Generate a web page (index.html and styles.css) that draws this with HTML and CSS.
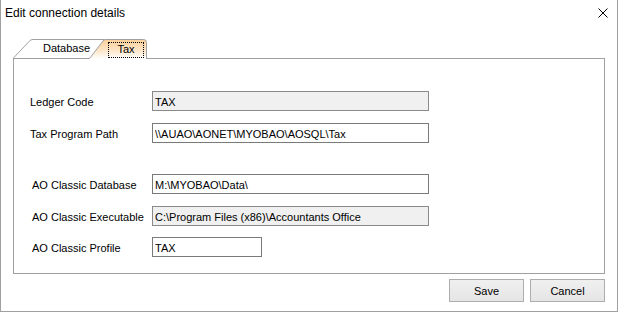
FILE: index.html
```html
<!DOCTYPE html>
<html>
<head>
<meta charset="utf-8">
<title>Edit connection details</title>
<link rel="stylesheet" href="styles.css">
</head>
<body>
<div class="window">
  <div class="titlebar">
    <span class="title">Edit connection details</span>
    <svg class="close" width="10" height="10" viewBox="0 0 10 10"><path d="M0.5 0.5 L9.5 9.5 M9.5 0.5 L0.5 9.5" stroke="#000" stroke-width="1" fill="none"/></svg>
  </div>
  <div class="content">
    <div class="tabs">
      <div class="tab tab-db">
        <svg class="tab-shape" width="92" height="19" viewBox="0 0 92 19"><path d="M0.5 19 L16 2.5 Q17.5 0.5 20 0.5 L91.5 0.5 L91.5 19" fill="#fff" stroke="#a0a0a0"/></svg>
        <span class="tab-label">Database</span>
      </div>
      <div class="tab tab-tax">
        <svg class="tab-shape" width="58" height="20" viewBox="0 0 58 20">
          <defs><linearGradient id="tg" x1="0" y1="0" x2="0" y2="1"><stop offset="0" stop-color="#fbcf98"/><stop offset="0.55" stop-color="#fde5c8"/><stop offset="1" stop-color="#ffffff"/></linearGradient></defs>
          <path d="M0 20 L0.5 19.5 L14 2 Q15 0.5 17 0.5 L54.5 0.5 Q57.5 0.5 57.5 3.5 L57.5 20 Z" fill="url(#tg)" stroke="none"/>
          <path d="M0.5 19.5 L14 2 Q15 0.5 17 0.5 L54.5 0.5 Q57.5 0.5 57.5 3.5 L57.5 20" fill="none" stroke="#a0a0a0"/>
        </svg>
        <span class="tab-label focus">Tax</span>
      </div>
    </div>
    <div class="panel">
      <div class="row"><label class="lbl">Ledger Code</label><input class="box ro" type="text" value="TAX" readonly></div>
      <div class="row"><label class="lbl">Tax Program Path</label><input class="box" type="text" value="\\AUAO\AONET\MYOBAO\AOSQL\Tax"></div>
      <div class="row sep ao"><label class="lbl">AO Classic Database</label><input class="box" type="text" value="M:\MYOBAO\Data\"></div>
      <div class="row ao"><label class="lbl">AO Classic Executable</label><input class="box ro" type="text" value="C:\Program Files (x86)\Accountants Office" readonly></div>
      <div class="row tight ao"><label class="lbl">AO Classic Profile</label><input class="box short" type="text" value="TAX"></div>
    </div>
    <div class="footer">
      <button class="btn">Save</button>
      <button class="btn">Cancel</button>
    </div>
  </div>
</div>
</body>
</html>
```
FILE: styles.css
```css
html, body {
  margin: 0;
  padding: 0;
  background: #fff;
}
.window {
  box-sizing: border-box;
  width: 618px;
  height: 312px;
  border: 1px solid #a0a0a0;
  border-top: none;
  background: #fff;
  font-family: "Liberation Sans", Arial, sans-serif;
  color: #000;
}
.titlebar {
  box-sizing: border-box;
  height: 39px;
  display: flex;
  justify-content: space-between;
  align-items: flex-start;
  padding: 6px 9px 0 4px;
}
.title {
  font-size: 12px;
  line-height: 14px;
}
.close {
  display: block;
  margin-top: 2px;
}
.content {
  padding: 0 12px;
}
.tabs {
  display: flex;
  height: 19px;
  font-size: 11px;
}
.tab {
  display: grid;
  position: relative;
}
.tab > * {
  grid-area: 1 / 1;
}
.tab-shape {
  display: block;
}
.tab-db {
  width: 92px;
  height: 19px;
}
.tab-db .tab-label {
  padding-left: 30px;
  line-height: 19px;
}
.tab-tax {
  width: 58px;
  height: 20px;
  margin-left: -16px;
  z-index: 2;
}
.tab-label.focus {
  box-sizing: border-box;
  margin: 3px 0 0 19px;
  width: 36px;
  height: 16px;
  border: 1px dotted #000;
  text-align: center;
  line-height: 13px;
}
.panel {
  box-sizing: border-box;
  height: 216px;
  border: 1px solid #a0a0a0;
  padding: 32px 0 0 16px;
  display: flex;
  flex-direction: column;
}
.row {
  display: flex;
  align-items: center;
  height: 20px;
  font-size: 11px;
}
.row + .row {
  margin-top: 12px;
}
.row.sep {
  margin-top: 31px;
}
.row.tight {
  margin-top: 11px;
}
.lbl {
  width: 122px;
  padding-top: 1px;
}
.row.ao .lbl {
  width: 120px;
  padding-left: 2px;
}
.box {
  box-sizing: border-box;
  width: 277px;
  height: 20px;
  border: 1px solid #7a7a7a;
  padding: 1px 2px 0;
  margin: 0;
  font-family: "Liberation Sans", Arial, sans-serif;
  font-size: 11px;
  color: #000;
  background: #fff;
  outline: none;
}
.box.ro {
  background: #f0f0f0;
  border-color: #8a8a8a;
}
.box.short {
  width: 110px;
}
.footer {
  display: flex;
  justify-content: flex-end;
  gap: 6px;
  margin-top: 5px;
}
.btn {
  box-sizing: border-box;
  width: 75px;
  height: 23px;
  border: 1px solid #adadad;
  background: linear-gradient(#f0f0f0, #e5e5e5);
  font-family: "Liberation Sans", Arial, sans-serif;
  font-size: 11px;
  color: #000;
  padding: 0;
  margin: 0;
}
```
